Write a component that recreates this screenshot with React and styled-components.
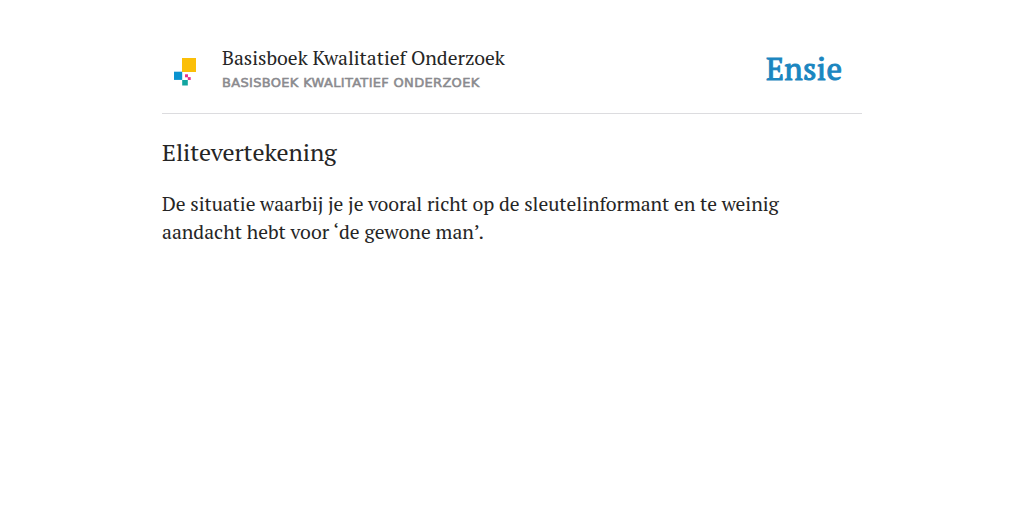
import React from "react";
import styled, { createGlobalStyle } from "styled-components";

const App = () => {
  return (
    <>
      <GlobalStyle />
      <Page>
        <Header>
          <Logo viewBox="0 0 60 60">
            <rect x="20" y="18" width="14" height="14" fill="#fbbf08" />
            <rect x="12" y="31.7" width="8.2" height="8.2" fill="#0a93d0" />
            <rect x="20.2" y="40" width="5.6" height="5.5" fill="#12a5a0" />
            <rect x="23" y="34.3" width="3" height="3" fill="#e8308c" />
            <rect x="25.8" y="37.1" width="2.9" height="2.9" fill="#e8308c" />
          </Logo>
          <Source>
            <SourceTitle>Basisboek Kwalitatief Onderzoek</SourceTitle>
            <SourceLabel>Basisboek Kwalitatief Onderzoek</SourceLabel>
          </Source>
          <Brand>Ensie</Brand>
        </Header>
        <Title>Elitevertekening</Title>
        <Definition>
          <Line $spacing="-0.04px">
            De situatie waarbij je je vooral richt op de sleutelinformant en te weinig
          </Line>
          <Line $spacing="0.03px">aandacht hebt voor ‘de gewone man’.</Line>
        </Definition>
      </Page>
    </>
  );
};

export default App;

const GlobalStyle = createGlobalStyle`
  body {
    margin: 0;
    background: #fff;
  }
`;

const Page = styled.main`
  width: 700px;
  margin: 0 auto;
  padding-top: 40px;
  font-family: "PT Serif", "Noto Serif", "Liberation Serif", serif;
  color: #252525;
`;

const Header = styled.header`
  display: flex;
  height: 73px;
  border-bottom: 1px solid #dcdcdf;
`;

const Logo = styled.svg`
  width: 60px;
  height: 60px;
`;

const Source = styled.div`
  flex: 1;
  padding-top: 4px;
`;

const SourceTitle = styled.div`
  font-size: 19.5px;
  line-height: 28px;
  letter-spacing: -0.02px;
`;

const SourceLabel = styled.div`
  font-family: "DejaVu Sans", sans-serif;
  font-size: 13px;
  line-height: 21px;
  letter-spacing: 0.32px;
  text-transform: uppercase;
  color: #8a8a8e;
  -webkit-text-stroke: 0.55px #8a8a8e;
`;

const Brand = styled.div`
  padding: 9px 19.5px 0 0;
  color: #1b86c0;
  font-size: 31px;
  -webkit-text-stroke: 1px #1b86c0;
  letter-spacing: 0.35px;
  line-height: 40px;
`;

const Title = styled.h1`
  margin: 20px 0 0;
  font-size: 24px;
  font-weight: 400;
  line-height: 36px;
  letter-spacing: -0.05px;
`;

const Definition = styled.p`
  margin: 20px 0 0;
  font-size: 19.5px;
  line-height: 28px;
`;

const Line = styled.span`
  display: block;
  letter-spacing: ${({ $spacing }) => $spacing};
`;
